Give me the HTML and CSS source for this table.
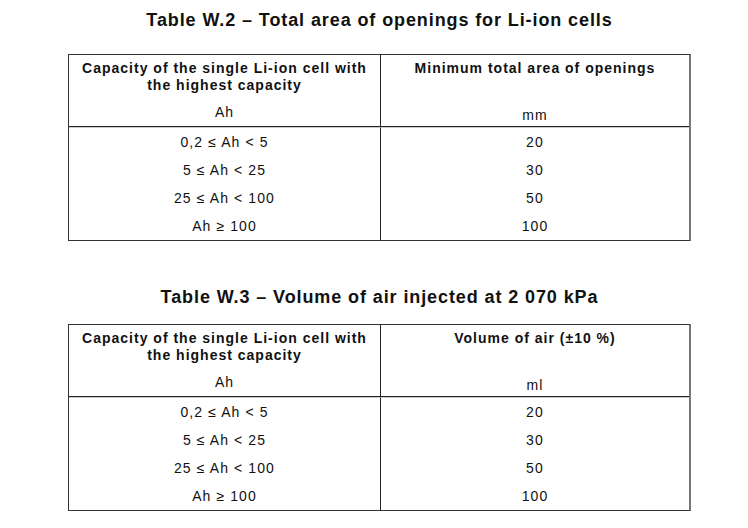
FILE: index.html
```html
<!DOCTYPE html>
<html>
<head>
<meta charset="utf-8">
<link rel="stylesheet" href="styles.css">
</head>
<body>
<div class="page">
  <section class="block">
    <h2 class="title">Table W.2 – Total area of openings for Li-ion cells</h2>
    <table class="tbl">
      <thead>
        <tr>
          <th class="hd">
            <div class="hd-main">Capacity of the single Li-ion cell with<br>the highest capacity</div>
            <div class="unit unit-l">Ah</div>
          </th>
          <th class="hd">
            <div class="hd-main">Minimum total area of openings</div>
            <div class="unit unit-r">mm</div>
          </th>
        </tr>
      </thead>
      <tbody>
        <tr class="first"><td>0,2 ≤ Ah &lt; 5</td><td>20</td></tr>
        <tr><td>5 ≤ Ah &lt; 25</td><td>30</td></tr>
        <tr><td>25 ≤ Ah &lt; 100</td><td>50</td></tr>
        <tr><td>Ah ≥ 100</td><td>100</td></tr>
      </tbody>
    </table>
  </section>
  <section class="block block2">
    <h2 class="title">Table W.3 – Volume of air injected at 2 070 kPa</h2>
    <table class="tbl">
      <thead>
        <tr>
          <th class="hd">
            <div class="hd-main">Capacity of the single Li-ion cell with<br>the highest capacity</div>
            <div class="unit unit-l">Ah</div>
          </th>
          <th class="hd">
            <div class="hd-main">Volume of air (±10 %)</div>
            <div class="unit unit-r">ml</div>
          </th>
        </tr>
      </thead>
      <tbody>
        <tr class="first"><td>0,2 ≤ Ah &lt; 5</td><td>20</td></tr>
        <tr><td>5 ≤ Ah &lt; 25</td><td>30</td></tr>
        <tr><td>25 ≤ Ah &lt; 100</td><td>50</td></tr>
        <tr><td>Ah ≥ 100</td><td>100</td></tr>
      </tbody>
    </table>
  </section>
</div>
</body>
</html>
```

FILE: styles.css
```css
html, body {
  margin: 0;
  padding: 0;
  background: #fff;
}
body {
  font-family: "Liberation Sans", Arial, sans-serif;
  color: #111;
}
.page {
  padding: 10px 0 0 68px;
}
.block {
  width: 623px;
}
.block2 {
  margin-top: 46px;
}
.title {
  margin: 0 0 24px 0;
  font-size: 18px;
  font-weight: bold;
  text-align: center;
  letter-spacing: 0.9px;
  line-height: 20px;
}
.block2 .title {
  margin-bottom: 17px;
}
.tbl {
  width: 623px;
  border-collapse: separate;
  border-spacing: 0;
  border: 1px solid #333;
  border-right: 2px solid #777;
  table-layout: fixed;
}
.tbl th, .tbl td {
  text-align: center;
  padding: 0;
}
.tbl th:first-child, .tbl td:first-child {
  width: 311px;
  border-right: 1px solid #222;
}
.hd {
  height: 71px;
  vertical-align: top;
  border-bottom: 1px solid #222;
  font-size: 14px;
  letter-spacing: 1px;
}
.hd-main {
  font-weight: bold;
  line-height: 17px;
  padding-top: 5px;
  height: 34px;
}
.unit {
  font-weight: normal;
  line-height: 16px;
}
.unit-l {
  padding-top: 10px;
}
.unit-r {
  padding-top: 13px;
}
.tbl tbody tr.first td {
  border-top: 1px solid #ccc;
}
.tbl td {
  height: 28px;
  font-size: 14px;
  letter-spacing: 1.1px;
  line-height: 16px;
  vertical-align: middle;
}
```
